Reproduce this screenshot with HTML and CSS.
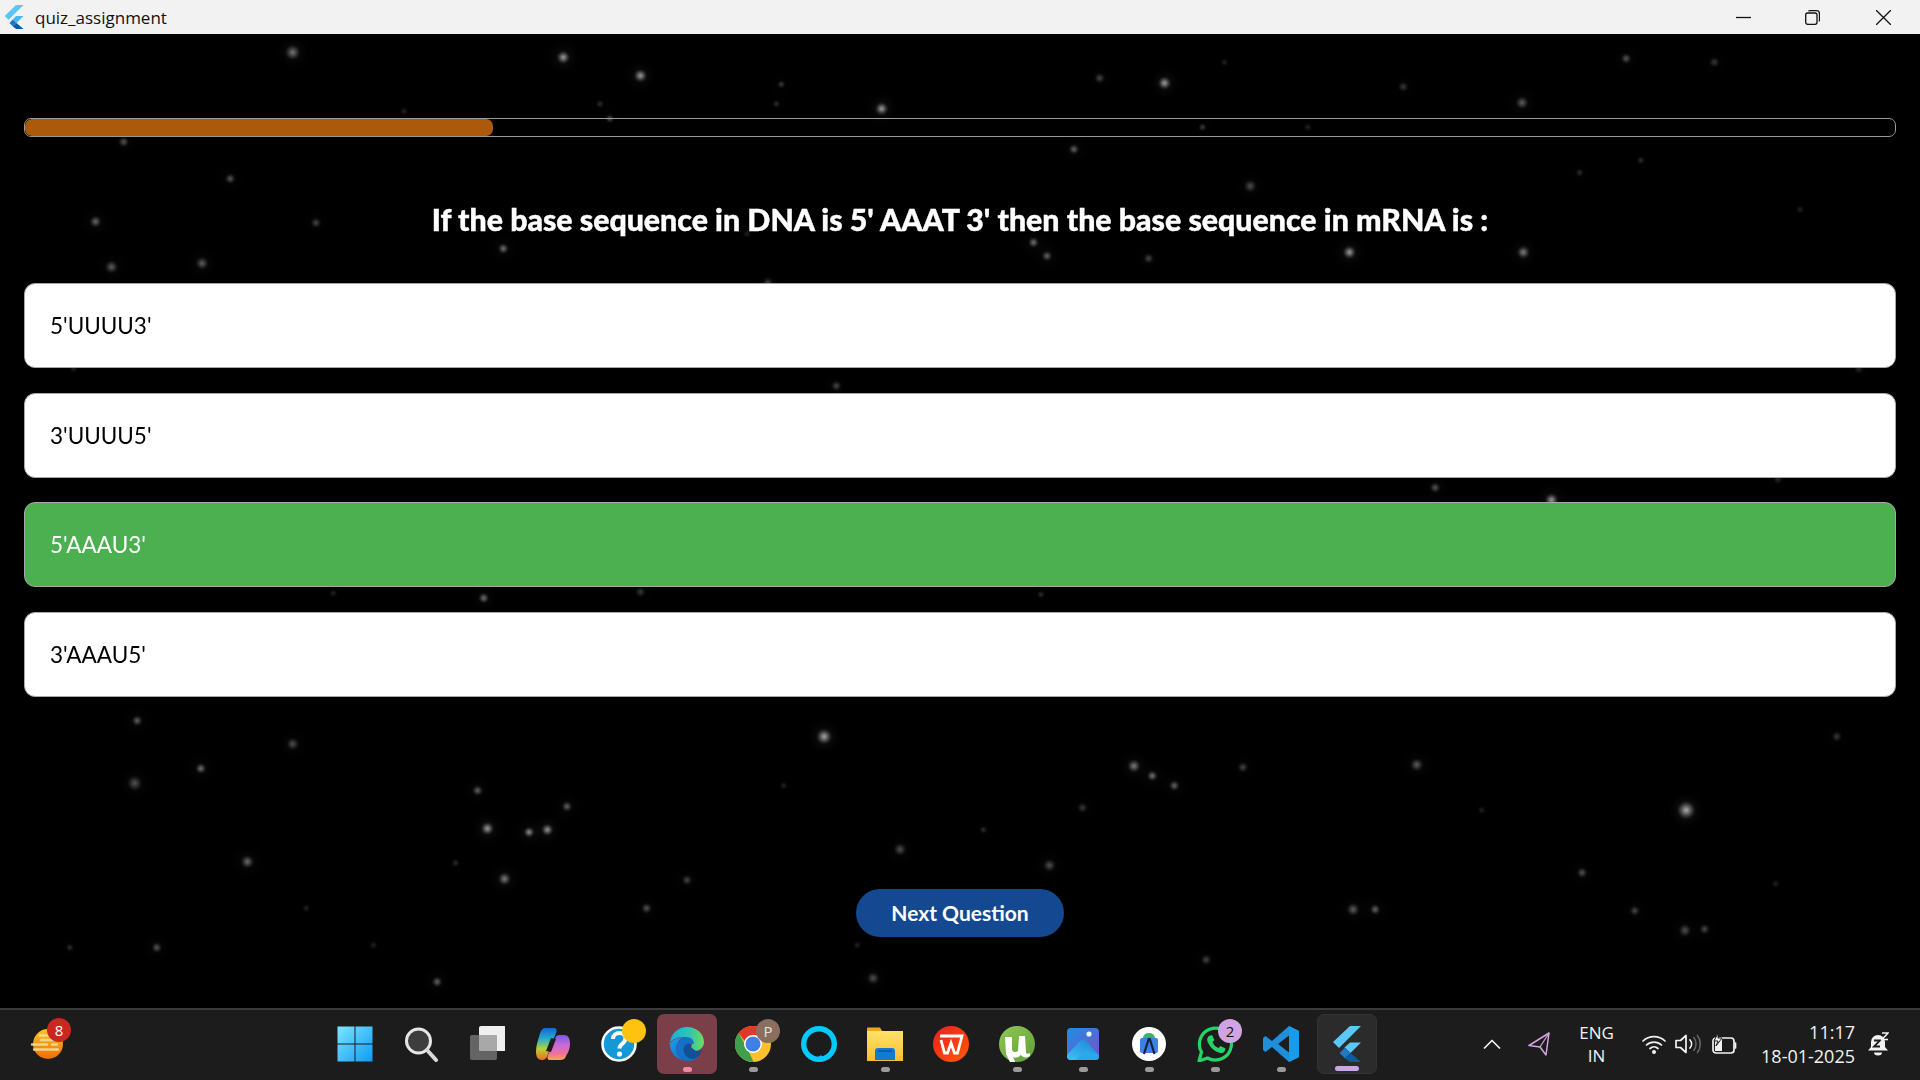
FILE: index.html
```html
<!DOCTYPE html>
<html lang="en">
<head>
<meta charset="utf-8">
<title>quiz_assignment</title>
<link rel="stylesheet" href="styles.css">
</head>
<body>
<svg width="0" height="0" class="defs">
  <defs>
    <radialGradient id="star">
      <stop offset="0" stop-color="#fff"/>
      <stop offset=".3" stop-color="#fff" stop-opacity=".55"/>
      <stop offset="1" stop-color="#fff" stop-opacity="0"/>
    </radialGradient>
    <linearGradient id="fl1" x1="0" y1="0" x2="1" y2="1"><stop offset="0" stop-color="#6fd3fb"/><stop offset="1" stop-color="#3fb6f2"/></linearGradient>
    <linearGradient id="win" x1="0" y1="0" x2="1" y2="1"><stop offset="0" stop-color="#7be6ff"/><stop offset="1" stop-color="#0f9af5"/></linearGradient>
    <linearGradient id="sun" x1="0" y1="0" x2="0" y2="1"><stop offset="0" stop-color="#ffc61a"/><stop offset="1" stop-color="#ee6c0a"/></linearGradient>
    <linearGradient id="cop" x1="0" y1="0" x2="0" y2="1"><stop offset="0" stop-color="#1268d8"/><stop offset=".35" stop-color="#27b0c8"/><stop offset=".65" stop-color="#b8d038"/><stop offset="1" stop-color="#f06a28"/></linearGradient>
    <linearGradient id="cop2" x1="0" y1="0" x2="0" y2="1"><stop offset="0" stop-color="#7a5ae0"/><stop offset=".4" stop-color="#c86ad8"/><stop offset=".75" stop-color="#f0709a"/><stop offset="1" stop-color="#f8a848"/></linearGradient>
    <linearGradient id="edget" x1="0" y1="0" x2="1" y2="0"><stop offset="0" stop-color="#1fa8e0"/><stop offset=".6" stop-color="#33c6b0"/><stop offset="1" stop-color="#6fdc5a"/></linearGradient>
    <linearGradient id="edgeb" x1="0" y1="0" x2="1" y2="1"><stop offset="0" stop-color="#1aa0ea"/><stop offset="1" stop-color="#0c6cc8"/></linearGradient>
    <linearGradient id="fold" x1="0" y1="0" x2="0" y2="1"><stop offset="0" stop-color="#ffe16a"/><stop offset="1" stop-color="#fbc02d"/></linearGradient>
    <linearGradient id="wps" x1="0" y1="0" x2="1" y2="1"><stop offset="0" stop-color="#ee1c25"/><stop offset="1" stop-color="#ff5a00"/></linearGradient>
    <linearGradient id="ut" x1="0" y1="0" x2="1" y2="1"><stop offset="0" stop-color="#92c853"/><stop offset="1" stop-color="#5f9e3a"/></linearGradient>
    <linearGradient id="pho" x1="0" y1="0" x2="1" y2="1"><stop offset="0" stop-color="#1d8fe6"/><stop offset="1" stop-color="#7a50c4"/></linearGradient>
    <linearGradient id="mnt" x1="0" y1="1" x2="1" y2="0"><stop offset="0" stop-color="#3cc4f2"/><stop offset="1" stop-color="#1f7ed8"/></linearGradient>
  </defs>
</svg>

<header class="titlebar">
  <svg class="app-logo" viewBox="0 0 20 24" width="20" height="24"><path d="M12 0h7.500L4.500 14.800.6 11z" fill="url(#fl1)"/><path d="M12 11h7.500l-7 7-3.800-3.600z" fill="#46b8f2"/><path d="M8.700 14.400l3.800 3.600-3.600 3.400-3.400-3.400z" fill="#1b79c4"/><path d="M8.900 21.400l3.600-3.400 7 6H12.200z" fill="#0d5aa0"/></svg>
  <span class="app-name">quiz_assignment</span>
  <div class="win-controls">
    <svg viewBox="0 0 15 15" width="15" height="15"><path d="M0 7.500h15" class="wc"/></svg>
    <svg class="wc-restore" viewBox="0 0 15 15" width="15" height="15"><rect x=".7" y="3" width="11.300" height="11.300" rx="2" class="wc"/><path d="M3.500 1.200A2 2 0 0 1 5 .7h6.500a3 3 0 0 1 3 3V10a2 2 0 0 1-.6 1.400" class="wc"/></svg>
    <svg viewBox="0 0 15 15" width="15" height="15"><path d="M0 0l15 15M15 0L0 15" class="wc"/></svg>
  </div>
</header>

<main class="quiz">
  <svg class="sky" viewBox="0 0 1568 796" width="1920" height="976" preserveAspectRatio="none" aria-hidden="true">
    <use href="#stars" class="halo"/>
    <g id="stars" class="stars" transform="translate(0,-27)" fill="url(#star)">
      <circle cx="720" cy="88" r="5"/><circle cx="523" cy="61" r="5"/><circle cx="460" cy="46" r="5"/><circle cx="239" cy="42" r="6" opacity=".7"/><circle cx="951" cy="67" r="5"/><circle cx="1267" cy="407" r="5"/><circle cx="1377" cy="660" r="7"/><circle cx="673" cy="600" r="6"/><circle cx="398" cy="675" r="5"/><circle cx="432" cy="678" r="4"/><circle cx="447" cy="676" r="4.500"/><circle cx="1102" cy="205" r="5"/><circle cx="1244" cy="205" r="5" opacity=".8"/><circle cx="844" cy="197" r="4" opacity=".8"/><circle cx="855" cy="208" r="4" opacity=".7"/><circle cx="411" cy="202" r="4" opacity=".8"/><circle cx="78" cy="180" r="4.500" opacity=".7"/><circle cx="258" cy="181" r="4" opacity=".5"/><circle cx="188" cy="145" r="4" opacity=".6"/><circle cx="101" cy="115" r="4" opacity=".6"/><circle cx="91" cy="217" r="5" opacity=".6"/><circle cx="165" cy="214" r="5" opacity=".6"/><circle cx="412" cy="716" r="5" opacity=".8"/><circle cx="202" cy="702" r="5" opacity=".7"/><circle cx="164" cy="626" r="4" opacity=".8"/><circle cx="112" cy="587" r="4" opacity=".7"/><circle cx="110" cy="638" r="6" opacity=".5"/><circle cx="239" cy="606" r="5" opacity=".5"/><circle cx="390" cy="644" r="4" opacity=".7"/><circle cx="463" cy="657" r="4" opacity=".7"/><circle cx="926" cy="624" r="5" opacity=".8"/><circle cx="941" cy="632" r="4" opacity=".8"/><circle cx="959" cy="640" r="4" opacity=".7"/><circle cx="1015" cy="625" r="4" opacity=".5"/><circle cx="1157" cy="623" r="5" opacity=".6"/><circle cx="884" cy="658" r="4" opacity=".4"/><circle cx="735" cy="692" r="5" opacity=".5"/><circle cx="857" cy="705" r="5" opacity=".5"/><circle cx="803" cy="676" r="3" opacity=".4"/><circle cx="561" cy="717" r="4" opacity=".5"/><circle cx="528" cy="740" r="4" opacity=".6"/><circle cx="1105" cy="741" r="5" opacity=".6"/><circle cx="1123" cy="741" r="4" opacity=".7"/><circle cx="1292" cy="711" r="4" opacity=".6"/><circle cx="1335" cy="742" r="4" opacity=".5"/><circle cx="1376" cy="758" r="5" opacity=".5"/><circle cx="1392" cy="757" r="4" opacity=".5"/><circle cx="985" cy="782" r="4" opacity=".5"/><circle cx="713" cy="797" r="5" opacity=".5"/><circle cx="856" cy="750" r="3" opacity=".4"/><circle cx="357" cy="800" r="4" opacity=".7"/><circle cx="128" cy="772" r="4" opacity=".6"/><circle cx="57" cy="772" r="3" opacity=".4"/><circle cx="372" cy="703" r="3" opacity=".4"/><circle cx="305" cy="770" r="3" opacity=".3"/><circle cx="683" cy="314" r="4" opacity=".5"/><circle cx="1172" cy="397" r="4" opacity=".6"/><circle cx="395" cy="487" r="4" opacity=".8"/><circle cx="523" cy="482" r="4" opacity=".4"/><circle cx="850" cy="484" r="3" opacity=".4"/><circle cx="272" cy="483" r="3" opacity=".3"/><circle cx="1021" cy="151" r="5" opacity=".5"/><circle cx="877" cy="121" r="4" opacity=".7"/><circle cx="1328" cy="47" r="4" opacity=".6"/><circle cx="1243" cy="83" r="5" opacity=".6"/><circle cx="1146" cy="70" r="4" opacity=".4"/><circle cx="638" cy="68" r="3" opacity=".5"/><circle cx="634" cy="84" r="3" opacity=".4"/><circle cx="498" cy="96" r="3" opacity=".7"/><circle cx="490" cy="84" r="3" opacity=".4"/><circle cx="898" cy="63" r="4" opacity=".5"/><circle cx="982" cy="103" r="3" opacity=".5"/><circle cx="1068" cy="103" r="3" opacity=".3"/><circle cx="627" cy="230" r="4" opacity=".5"/><circle cx="938" cy="210" r="4" opacity=".5"/><circle cx="1290" cy="140" r="3" opacity=".4"/><circle cx="1340" cy="130" r="3" opacity=".4"/><circle cx="1518" cy="300" r="4" opacity=".3"/><circle cx="1452" cy="390" r="4" opacity=".3"/><circle cx="1500" cy="600" r="4" opacity=".4"/><circle cx="60" cy="300" r="3" opacity=".3"/><circle cx="1400" cy="50" r="4" opacity=".4"/><circle cx="330" cy="90" r="3" opacity=".3"/><circle cx="610" cy="190" r="3" opacity=".3"/><circle cx="1470" cy="170" r="3" opacity=".3"/><circle cx="1000" cy="50" r="3" opacity=".3"/><circle cx="700" cy="770" r="3" opacity=".3"/><circle cx="1210" cy="660" r="3" opacity=".3"/><circle cx="1450" cy="720" r="3" opacity=".3"/><circle cx="250" cy="740" r="3" opacity=".3"/><circle cx="640" cy="640" r="3" opacity=".3"/>
    </g>
  </svg>

  <div class="progress"><div class="progress-fill" style="width:25%"></div></div>
  <h1 class="question">If the base sequence in DNA is 5' AAAT 3' then the base sequence in mRNA is :</h1>
  <div class="options">
    <div class="option">5'UUUU3'</div>
    <div class="option">3'UUUU5'</div>
    <div class="option correct">5'AAAU3'</div>
    <div class="option">3'AAAU5'</div>
  </div>
  <button class="next" type="button">Next Question</button>
</main>

<footer class="taskbar">
  <div class="weather">
    <svg viewBox="0 0 36 36" width="36" height="36"><ellipse cx="19" cy="18" rx="15" ry="15" fill="url(#sun)"/><path d="M11 9.500h18M12 14h18M3 18.500h15M23 18.500h5M5 23.500h24" stroke="#f3dc9b" stroke-width="2.400" stroke-linecap="round" opacity=".9"/></svg>
    <span class="badge badge-red">8</span>
  </div>

  <div class="apps">
    <div class="app"><svg viewBox="0 0 36 36" width="36" height="36"><path d="M.5.500h17v17H.5zM18.500.500h17v17h-17zM.5 18.500h17v17H.5zM18.500 18.500h17v17h-17z" fill="url(#win)"/></svg></div>
    <div class="app"><svg class="i-search" viewBox="0 0 36 36" width="36" height="36"><circle cx="15.500" cy="15" r="12" fill="#3d3d3d" stroke="#e6e6e6" stroke-width="3"/><path d="M24 24l9 10" stroke="#d8d8d8" stroke-width="4" stroke-linecap="round"/></svg></div>
    <div class="app"><svg viewBox="0 0 36 36" width="36" height="36"><rect x="10" y="0" width="27" height="25" rx="2" fill="#efefef"/><rect x="1" y="9" width="27" height="25" rx="2" fill="#6a6a6a" opacity=".92"/><rect x="10" y="9" width="18" height="16" rx="1" fill="#a8a8a8"/></svg></div>
    <div class="app"><svg viewBox="0 0 36 36" width="36" height="36"><path d="M10 2h9c3 0 3 3 2 5L13 28c-1 4-3 6-6 6-4 0-6-3-6-8 0-5 1-9 3-15 1-5 3-9 6-9z" fill="url(#cop)"/><path d="M24 9h5c4 0 6 3 6 9 0 5-2 9-4 12-1 3-3 4-6 4h-9c-4 0-4-2-3-5l7-16c1-3 2-4 4-4z" fill="url(#cop2)"/><path d="M16 12l5 1-5 13-5-1z" fill="#1c1c1c"/></svg></div>
    <div class="app">
      <svg viewBox="0 0 36 36" width="36" height="36"><circle cx="18" cy="18" r="16.500" fill="#1798d6" stroke="#fff" stroke-width="2.500"/><path d="M12 13c0-4 3-6 6.500-6s6 2.300 6 5.500c0 5-6 5-6 10" fill="none" stroke="#fff" stroke-width="4"/><circle cx="18.500" cy="28" r="2.600" fill="#fff"/></svg>
      <span class="badge badge-yellow"></span>
    </div>
    <div class="app app-open-red">
      <svg viewBox="0 0 36 36" width="36" height="36"><path d="M1 18C1 8 9 1 18 1c10 0 17 7 17 15 0 6-5 9-10 9-3 0-5-1-6-2 3-1 4-3 4-5 0-4-4-7-9-7-6 0-12 3-14 7z" fill="url(#edget)"/><path d="M1 18c2-4 8-7 14-7-5 2-8 7-8 12 0 6 5 11 11 12h1C8 35 1 27 1 18z" fill="url(#edgeb)"/><path d="M7 23c0-5 4-11 10-12 5 0 8 3 8 7-2-1-7-1-9 2-2 4 0 9 6 11 4 1 7 0 9-1-3 3-7 5-12 5-7-1-12-6-12-12z" fill="#1470c8"/><path d="M15 21c1-3 4-4 6-3 0 2 2 5 6 7 2 1 4 0 6-1-1 4-4 8-9 9-6 0-11-6-9-12z" fill="#114f96"/></svg>
      <span class="dot dot-pink"></span>
    </div>
    <div class="app">
      <svg viewBox="0 0 36 36" width="36" height="36"><circle cx="18" cy="18" r="18" fill="#fbc02d"/><path d="M18 0a18 18 0 0 1 15.600 9H18a9 9 0 0 0-8.500 6L3.500 7A18 18 0 0 1 18 0z" fill="#e0392b"/><path d="M3.500 7l8.600 15 6.500 13.900A18 18 0 0 1 3.500 7z" fill="#3ea04b"/><circle cx="18" cy="18" r="9" fill="#fff"/><circle cx="18" cy="18" r="7.500" fill="#3e7fe8"/></svg>
      <span class="badge badge-brown">P</span>
      <span class="dot"></span>
    </div>
    <div class="app"><svg viewBox="0 0 36 36" width="36" height="36"><circle cx="18" cy="18" r="15.300" fill="none" stroke="#00caff" stroke-width="5.400"/><path d="M13 35l7-6 3 4z" fill="#00caff"/></svg></div>
    <div class="app">
      <svg viewBox="0 0 36 36" width="36" height="36"><path d="M0 2.500a1 1 0 0 1 1-1h12l3 5H0z" fill="#f0a818"/><rect x="0" y="5" width="36" height="30" fill="url(#fold)"/><path d="M8 34v-9c0-2 1-3 3-3h14c2 0 3 1 3 3v9z" fill="#0e7dd0"/><rect x="11" y="24" width="14" height="2" fill="#0a5fa8"/></svg>
      <span class="dot"></span>
    </div>
    <div class="app"><svg viewBox="0 0 36 36" width="36" height="36"><circle cx="18" cy="18" r="18" fill="url(#wps)"/><path d="M7 10h22l-4.500 17h-3L18 17l-3.500 10h-3L8 14" fill="none" stroke="#fff" stroke-width="2.800"/></svg></div>
    <div class="app">
      <svg viewBox="0 0 36 36" width="36" height="36"><circle cx="18" cy="18" r="18" fill="url(#ut)"/><path d="M6 11h7v12c0 3 3 4 6 2l1-15h6l1 16c0 2 2 2 4 1v3c-3 2-7 2-9-1-3 3-6 3-8 2l3 7-4 2-6-12z" fill="#fff"/></svg>
      <span class="dot"></span>
    </div>
    <div class="app">
      <svg viewBox="0 0 36 36" width="36" height="36"><rect x="2" y="2" width="32" height="32" rx="4" fill="url(#pho)"/><circle cx="24" cy="8" r="2.600" fill="#eaf6ff"/><path d="M2 29L15 15c2-2 4-2 6 0l13 14v1a4 4 0 0 1-4 4H6a4 4 0 0 1-4-4z" fill="url(#mnt)"/><path d="M11 34l9-9c2-2 4-1 6 1l8 3v1a4 4 0 0 1-4 4z" fill="#2aa8ec"/></svg>
      <span class="dot"></span>
    </div>
    <div class="app">
      <svg viewBox="0 0 36 36" width="36" height="36"><circle cx="18" cy="18" r="17" fill="#fff"/><rect x="9" y="12" width="18" height="15" rx="2" fill="#3f7fe6"/><path d="M12 12a6 5 0 0 1 12 0z" fill="#3fb06a"/><path d="M18 12l-5 16M18.500 12l5 16" stroke="#12223f" stroke-width="2.200" fill="none"/></svg>
      <span class="dot"></span>
    </div>
    <div class="app">
      <svg viewBox="0 0 36 36" width="36" height="36"><path d="M2 35l2.500-9A16 16 0 1 1 10.500 32z" fill="#1c1c1c" stroke="#25d366" stroke-width="3.200" stroke-linejoin="round"/><path d="M12 10l3-1 2.500 5-2 2c1 3 3 5 6 6l2-2 5 2.500-1 3c-1 1.500-3 2-6 1-5-2-9-6-11-11-.8-2.500 0-4.500 1.500-5.500z" fill="#25d366"/></svg>
      <span class="badge badge-lilac">2</span>
      <span class="dot"></span>
    </div>
    <div class="app">
      <svg viewBox="0 0 36 36" width="36" height="36"><path d="M26 0l10 5v26l-10 5-17-15-6.500 5L0 24v-12l2.500-2L9 15z" fill="#1f8fdc"/><path d="M26 9.500L15 18l11 8.500z" fill="#1c1c1c"/><path d="M26 0l10 5v26l-10 5z" fill="#1b9ae8"/></svg>
      <span class="dot"></span>
    </div>
    <div class="app app-open">
      <svg viewBox="0 0 30 36" width="30" height="36"><path d="M18 0h11L7 22 1 16z" fill="#5cc8f8"/><path d="M18 16.500h11L18.500 27l-6-5.500z" fill="#5cc8f8"/><path d="M12.500 22l6 5-5.500 5.500-5.500-5.500z" fill="#1e78c2"/><path d="M13 32.500l5.500-5.500L29 36H18z" fill="#0d5aa0"/></svg>
      <span class="dot dot-wide"></span>
    </div>
  </div>

  <div class="tray">
    <svg class="t-chevron" viewBox="0 0 18 10" width="18" height="10"><path d="M1.500 9L9 1.500 16.500 9" class="ti"/></svg>
    <svg class="t-send" viewBox="0 0 22 24" width="22" height="24"><path d="M21 1L1 13.500l11 1.500 6 8z" fill="none" stroke="#d3a4e0" stroke-width="1.500" stroke-linejoin="round"/><path d="M21 1L12 15" stroke="#d3a4e0" stroke-width="1.200"/></svg>
    <div class="lang"><span>ENG</span><span>IN</span></div>
    <svg class="t-wifi" viewBox="0 0 24 20" width="24" height="20"><path d="M1 7a16 16 0 0 1 22 0M4.500 11a11 11 0 0 1 15 0M8 14.500a6 6 0 0 1 8 0" class="ti"/><circle cx="12" cy="18" r="2" fill="#f2f2f2"/></svg>
    <svg class="t-vol" viewBox="0 0 26 22" width="26" height="22"><path d="M1 7.500h4.500L11 2.500v17l-5.500-5H1z" class="ti"/><path d="M15 7a6 6 0 0 1 0 8" class="ti"/><path d="M18.500 4a11 11 0 0 1 0 14M22 2a14 14 0 0 1 0 18" fill="none" stroke="#666" stroke-width="1.500"/></svg>
    <svg class="t-batt" viewBox="0 0 26 22" width="26" height="22"><rect x="1" y="5" width="21" height="15" rx="3" class="ti"/><path d="M23.500 10v5" class="ti"/><path d="M3 18V8l7-3v13z" fill="#f2f2f2"/><path d="M6 0L2 8h4l-2 5 6-8H6z" fill="#f2f2f2" stroke="#1c1c1c"/></svg>
    <div class="clock"><span>11:17</span><span>18-01-2025</span></div>
    <svg class="t-bell" viewBox="0 0 22 24" width="22" height="24"><path d="M11 3a7 7 0 0 0-7 7v5l-3 3.500h20L18 15v-5a7 7 0 0 0-7-7z" fill="#f2f2f2"/><path d="M7 20.500h8a4 3 0 0 1-8 0z" fill="#f2f2f2"/><path d="M7 8.500h6l-6 6h6" fill="none" stroke="#1c1c1c" stroke-width="1.800"/><path d="M15 1h6l-6 6.500h6" fill="none" stroke="#f2f2f2" stroke-width="1.500"/></svg>
  </div>
</footer>
</body>
</html>
```

FILE: styles.css
```css
* { box-sizing: border-box; }

html, body {
  margin: 0;
  height: 100%;
  overflow: hidden;
}

body {
  display: flex;
  flex-direction: column;
  height: 100vh;
  background: #000;
  font-family: "Open Sans", "Noto Sans", sans-serif;
}

.defs { position: absolute; }

/* Title bar */
.titlebar {
  height: 34px;
  flex: none;
  display: flex;
  align-items: center;
  background: #f2f2f2;
  padding: 0 29px 0 4px;
}
.app-logo { flex: none; }
.app-name {
  margin-left: 11px;
  font-size: 17px;
  color: #111;
}
.win-controls {
  margin-left: auto;
  display: flex;
  gap: 54px;
}
.wc-restore { margin-right: 2px; }
.wc { fill: none; stroke: #111; stroke-width: 1.3; }

/* Quiz */
.quiz {
  position: relative;
  flex: none;
  height: 974px;
  padding: 84px 24px 0;
  display: flex;
  flex-direction: column;
  background: #000;
}
.sky { position: absolute; left: 0; top: 0; }
.stars { filter: blur(.7px); opacity: .8; }
.halo { filter: blur(5px); opacity: .6; }
.progress, .question, .options, .next { position: relative; }

.progress {
  height: 19px;
  border: 1.5px solid #999;
  border-radius: 7px;
  overflow: hidden;
}
.progress-fill {
  height: 100%;
  background: #ad590b;
  border-radius: 7px;
}

.question {
  margin: 62px 0 0;
  height: 40px;
  line-height: 40px;
  text-align: center;
  font-family: "Lato", sans-serif;
  font-size: 30.300px;
  font-weight: 900;
  -webkit-text-stroke: .4px #fff;
  color: #fff;
}

.options {
  margin-top: 44px;
  display: flex;
  flex-direction: column;
  gap: 24.500px;
}
.option {
  height: 85px;
  display: flex;
  align-items: center;
  padding-left: 25px;
  background: #fff;
  border: 1.5px solid #a8a8a8;
  border-radius: 11px;
  font-family: "Lato", sans-serif;
  font-size: 22.500px;
  color: #000;
}
.option.correct {
  background: #4caf50;
  color: #fff;
}

.next {
  align-self: center;
  margin-top: 192px;
  width: 208px;
  height: 48px;
  border: 0;
  border-radius: 24px;
  background: #144891;
  color: #fff;
  font-family: "Lato", sans-serif;
  font-size: 21px;
  font-weight: 700;
}

/* Taskbar */
.taskbar {
  flex: none;
  height: 72px;
  padding-bottom: 2px;
  display: flex;
  align-items: center;
  background: #1c1c1c;
  border-top: 2px solid #3a3a3a;
  color: #f2f2f2;
}
.weather {
  position: relative;
  width: 36px;
  height: 36px;
  margin-left: 29px;
  flex: none;
}
.apps {
  display: flex;
  margin-left: 257px;
  flex: none;
}
.app {
  position: relative;
  width: 66px;
  height: 60px;
  display: flex;
  align-items: center;
  justify-content: center;
  border-radius: 7px;
}
.app-open-red { width: 60px; margin: 0 3px 0 5px; background: #7a3f48; }
.app-open { width: 60px; margin-left: 3px; background: #2b2b2b; border: 1px solid #333; }

.dot {
  position: absolute;
  left: 50%;
  bottom: 2px;
  width: 9px;
  height: 5px;
  margin-left: -4.500px;
  border-radius: 3px;
  background: #9a9a9a;
}
.dot-pink { background: #f08aa0; }
.dot-wide { width: 24px; margin-left: -12px; background: #cba6e4; }

.badge {
  position: absolute;
  width: 24px;
  height: 24px;
  border-radius: 50%;
  display: flex;
  align-items: center;
  justify-content: center;
  font-size: 15px;
  color: #fff;
}
.weather .badge { left: 18px; top: -8px; }
.app .badge { left: 36px; top: 5px; }
.badge-red { background: #c8281e; }
.badge-yellow { background: #ffc20e; }
.badge-brown { background: #8a6f60; color: #e8e0da; }
.badge-lilac { background: #cfa3e4; color: #111; }

.tray {
  margin-left: auto;
  padding-right: 31px;
  display: flex;
  align-items: center;
  flex: none;
}
.ti { fill: none; stroke: #f2f2f2; stroke-width: 1.700; stroke-linecap: round; stroke-linejoin: round; }
.t-send { margin-left: 27px; }
.lang {
  width: 60px;
  margin-left: 17px;
  display: flex;
  flex-direction: column;
  align-items: center;
  font-size: 17px;
  line-height: 23px;
}
.t-wifi { margin-left: 15px; }
.t-vol { margin-left: 9.500px; }
.t-batt { margin-left: 11px; }
.clock {
  margin-left: 23px;
  display: flex;
  flex-direction: column;
  align-items: flex-end;
  font-size: 18px;
  line-height: 24px;
}
.t-bell { margin-left: 12px; }
```
